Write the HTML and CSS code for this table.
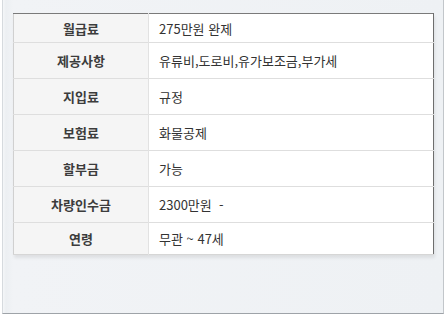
FILE: index.html
```html
<!DOCTYPE html>
<html lang="ko">

<head>
  <meta charset="UTF-8">
  <meta name="viewport" content="width=device-width, initial-scale=1.0">
  <title>채용 조건</title>
  <link rel="stylesheet" href="styles.css">
</head>

<body>
  <div class="frame">
    <table class="terms">
      <tr class="first">
        <th>월급료</th>
        <td>275만원 완제</td>
      </tr>
      <tr>
        <th>제공사항</th>
        <td>유류비,도로비,유가보조금,부가세</td>
      </tr>
      <tr>
        <th>지입료</th>
        <td>규정</td>
      </tr>
      <tr>
        <th>보험료</th>
        <td>화물공제</td>
      </tr>
      <tr>
        <th>할부금</th>
        <td>가능</td>
      </tr>
      <tr>
        <th>차량인수금</th>
        <td>2300만원 &nbsp;-</td>
      </tr>
      <tr class="last">
        <th>연령</th>
        <td>무관 ~ 47세</td>
      </tr>
    </table>
  </div>
</body>

</html>
```

FILE: styles.css
```css
* {
  box-sizing: border-box;
  margin: 0;
  padding: 0;
}

body {
  background-color: #ffffff;
  font-family: "Noto Sans CJK KR", "Liberation Sans", sans-serif;
  height: 315px;
  overflow: hidden;
}

.frame {
  background: linear-gradient(to right, #f4f6f8 0, #eceff2 3px, #f1f3f6 10px, #eef1f4 100%);
  border-bottom: 1px solid #9ea3a8;
  border-left: 1px solid #d6dade;
  border-right: 1px solid #c2c6ca;
  height: 314px;
  margin-left: 2px;
  padding: 13px 9px 0 10px;
  width: 442px;
}

.terms {
  background-color: #ffffff;
  border-collapse: collapse;
  border-left: 1px solid #d0d0d0;
  border-right: 1px solid #6e6e6e;
  border-top: 1px solid #7a7a7a;
  box-shadow: 1px 3px 3px rgba(0, 0, 0, 0.08);
  width: 421px;
}

.terms tr {
  border-bottom: 1px solid #dedede;
  height: 36px;
}

.terms tr.first {
  height: 29px;
}

.terms tr.last {
  border-bottom: 1px solid #d6d6d6;
  height: 32px;
}

.terms th {
  background-color: #f5f5f5;
  border-right: 1px solid #e2e2e2;
  color: #3c3c3c;
  font-size: 13px;
  font-weight: bold;
  text-align: center;
  width: 135px;
}

.terms td {
  color: #333333;
  font-size: 13px;
  padding-left: 10px;
  text-align: left;
}
```
